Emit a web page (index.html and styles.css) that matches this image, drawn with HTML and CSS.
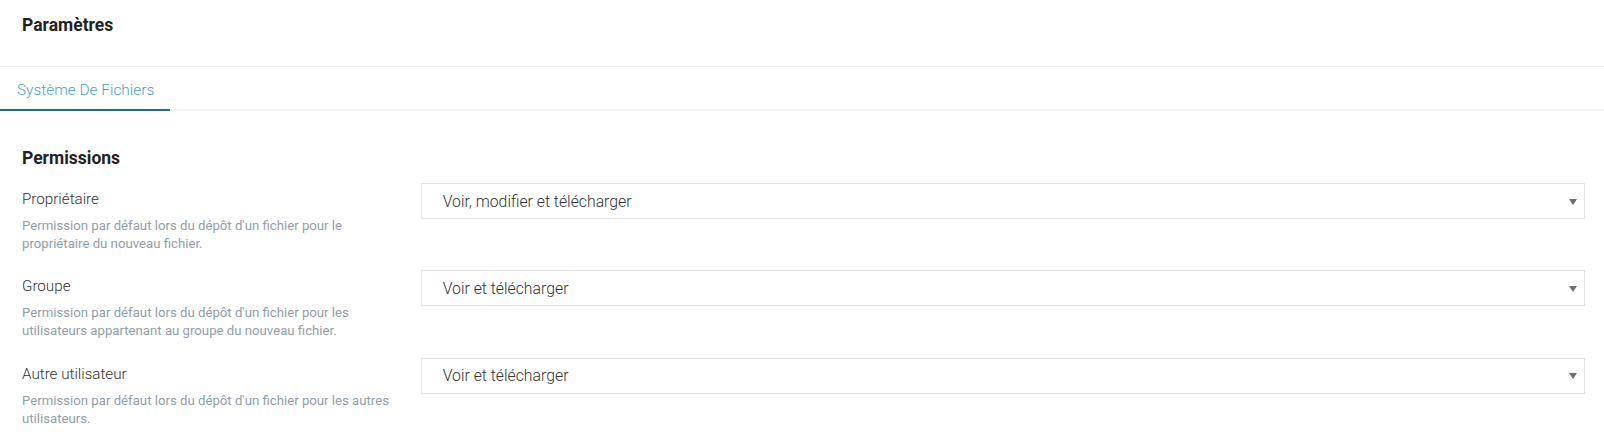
FILE: index.html
```html
<!DOCTYPE html>
<html lang="fr">
<head>
<meta charset="utf-8">
<title>Paramètres</title>
<link rel="stylesheet" href="styles.css">
</head>
<body>
<div class="page">
  <header class="page-header">
    <h1 class="page-title">Paramètres</h1>
  </header>
  <nav class="tabs">
    <div class="tab tab-active">Système De Fichiers</div>
  </nav>
  <main class="content">
    <h2 class="section-title">Permissions</h2>
    <div class="rows">
      <div class="row">
        <div class="row-info">
          <div class="row-label">Propriétaire</div>
          <div class="row-desc">Permission par défaut lors du dépôt d'un fichier pour le propriétaire du nouveau fichier.</div>
        </div>
        <div class="select">
          <span class="select-value">Voir, modifier et télécharger</span>
          <span class="select-arrow"></span>
        </div>
      </div>
      <div class="row">
        <div class="row-info">
          <div class="row-label">Groupe</div>
          <div class="row-desc">Permission par défaut lors du dépôt d'un fichier pour les utilisateurs appartenant au groupe du nouveau fichier.</div>
        </div>
        <div class="select">
          <span class="select-value">Voir et télécharger</span>
          <span class="select-arrow"></span>
        </div>
      </div>
      <div class="row">
        <div class="row-info">
          <div class="row-label">Autre utilisateur</div>
          <div class="row-desc">Permission par défaut lors du dépôt d'un fichier pour les autres utilisateurs.</div>
        </div>
        <div class="select">
          <span class="select-value">Voir et télécharger</span>
          <span class="select-arrow"></span>
        </div>
      </div>
    </div>
  </main>
</div>
</body>
</html>
```
FILE: styles.css
```css
* { box-sizing: border-box; }
html, body { margin: 0; padding: 0; }
body {
  font-family: Roboto, "Liberation Sans", Arial, sans-serif;
  background: #fff;
  color: #333;
  width: 1604px;
  height: 448px;
  overflow: hidden;
}
.page-header {
  background: #fff;
  height: 67px;
  padding: 15px 22px 0;
  border-bottom: 1px solid #ebebeb;
}
.page-title {
  margin: 0;
  font-size: 17.5px;
  line-height: 20px;
  font-weight: 700;
  color: #222;
}
.tabs {
  background: #fff;
  display: flex;
  border-bottom: 2px solid #f2f6fa;
  height: 44px;
}
.tab {
  padding: 13px 16px 0 17px;
  font-size: 15.4px;
  line-height: 20px;
  font-weight: 300;
  color: #4a9fc5;
  height: 44px;
  margin-bottom: -2px;
}
.tab-active {
  border-bottom: 2px solid #1d6f86;
}
.content {
  padding: 37px 19px 0 22px;
}
.section-title {
  margin: 0;
  font-size: 17.5px;
  line-height: 20px;
  font-weight: 700;
  color: #222;
}
.rows {
  margin-top: 15px;
  display: flex;
  flex-direction: column;
  gap: 17.4px;
}
.row {
  display: grid;
  grid-template-columns: 398.7px 1fr;
  align-items: start;
}
.row-info {
  padding-top: 6px;
}
.row-label {
  font-size: 15.2px;
  line-height: 20px;
  color: #333;
  font-weight: 300;
}
.row-desc {
  margin-top: 8px;
  max-width: 375px;
  font-size: 13.2px;
  line-height: 18px;
  color: #929eab;
}
.select {
  height: 36px;
  background: #fff;
  border: 1px solid #e3e5e8;
  display: flex;
  align-items: center;
  justify-content: space-between;
  padding: 0 7px 0 21px;
}
.select-value {
  font-size: 15.8px;
  font-weight: 300;
  color: #333;
}
.select-arrow {
  width: 0;
  height: 0;
  border-left: 4.5px solid transparent;
  border-right: 4.5px solid transparent;
  border-top: 6px solid #6f6f6f;
  margin-top: 1px;
}
```
